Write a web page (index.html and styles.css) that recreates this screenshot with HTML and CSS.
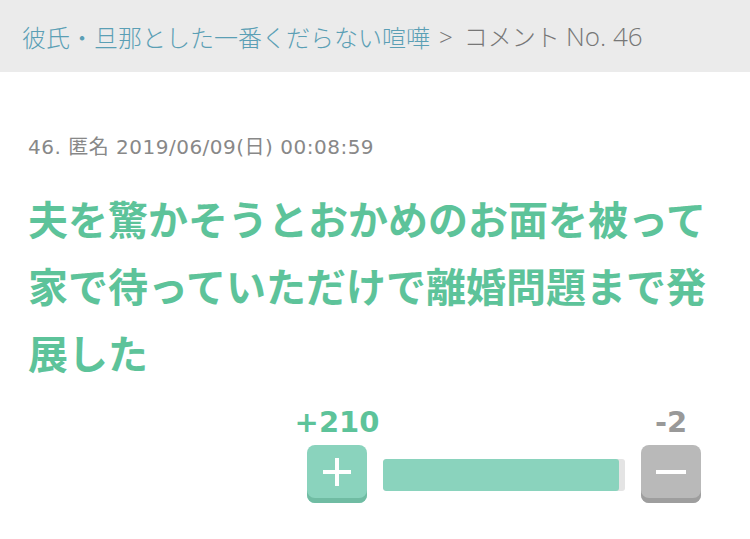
FILE: index.html
```html
<!DOCTYPE html>
<html lang="ja">
<head>
  <meta charset="UTF-8">
  <meta name="viewport" content="width=device-width, initial-scale=1.0">
  <title>コメント No. 46</title>
  <link rel="stylesheet" href="styles.css">
</head>
<body>
  <div class="crumbs">
    <a href="#">彼氏・旦那とした一番くだらない喧嘩</a><span class="sep">&gt;</span><span>コメント <span class="num">No. 46</span></span>
  </div>

  <div class="comment">
    <div class="meta">46. 匿名 2019/06/09(日) 00:08:59</div>
    <h1 class="body">夫を驚かそうとおかめのお面を被って家で待っていただけで離婚問題まで発展した</h1>

    <div class="votes">
      <div class="vote">
        <span class="count plus">+210</span>
        <button class="btn btn-plus" aria-label="プラス">
          <svg width="30" height="30" viewBox="0 0 30 30"><path d="M15 1v28M1 15h28" stroke="#fff" stroke-width="4"/></svg>
        </button>
      </div>
      <div class="bar"><div class="bar-fill" style="width: 97.5%"></div></div>
      <div class="vote">
        <span class="count minus">-2</span>
        <button class="btn btn-minus" aria-label="マイナス">
          <svg width="32" height="30" viewBox="0 0 32 30"><path d="M1 15h30" stroke="#fff" stroke-width="4"/></svg>
        </button>
      </div>
    </div>
  </div>
</body>
</html>
```

FILE: styles.css
```css
body { margin: 0; background: #fff; font-family: "Noto Sans CJK JP", sans-serif; }

.crumbs { height: 72px; background: #ebebeb; display: flex; align-items: center; padding-left: 22px; font-family: "Open Sans", "Noto Sans CJK JP", sans-serif; font-size: 24px; font-weight: 300; color: #777; }
.crumbs a { color: #5b9fb5; text-decoration: none; }
.crumbs .sep { margin: 0 11px 0 9px; }
.crumbs .num { font-size: 26px; }

.comment { padding: 0 28px; }
.meta { margin-top: 63px; font-family: "DejaVu Sans", "Noto Sans CJK JP", sans-serif; font-size: 20px; letter-spacing: 0.5px; line-height: 24px; color: #888; }
.body { margin: 26px 0 0; font-size: 40px; line-height: 67px; font-weight: 700; color: #5dc39a; }

.votes { display: flex; align-items: flex-end; gap: 16px; width: 394px; margin: 21px 21px 0 auto; }
.vote { display: flex; flex-direction: column; align-items: center; width: 60px; }
.count { font-family: "DejaVu Sans", sans-serif; font-weight: 700; font-size: 29px; line-height: 30px; margin-bottom: 8px; white-space: nowrap; }
.count.plus { color: #5dc39a; }
.count.minus { color: #999; }

.btn { width: 60px; height: 58px; border: none; border-radius: 8px; padding: 0 0 5px; display: flex; align-items: center; justify-content: center; cursor: pointer; }
.btn-plus { background: #8ad3bd; box-shadow: inset 0 -5px 0 #70bca3; }
.btn-minus { background: #b9b9b9; box-shadow: inset 0 -5px 0 #9e9e9e; }

.bar { flex: 1; height: 32px; margin-bottom: 12px; background: #e4e4e4; border-radius: 3px; overflow: hidden; }
.bar-fill { height: 100%; background: #8ad3bd; border-radius: 3px; }
```
